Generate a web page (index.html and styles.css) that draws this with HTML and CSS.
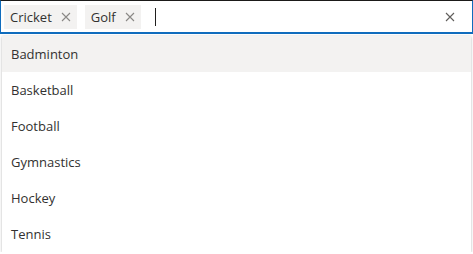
FILE: index.html
```html
<!DOCTYPE html>
<html>
<head>
<meta charset="utf-8">
<link rel="stylesheet" href="styles.css">
</head>
<body>
<div class="wrap">
  <div class="input">
    <div class="chips">
      <span class="chip">Cricket<span class="chip-x"><svg width="10" height="10" viewBox="0 0 10 10"><path d="M1 1L9 9M9 1L1 9" stroke="#8a8886" stroke-width="1.1" fill="none"/></svg></span></span>
      <span class="chip">Golf<span class="chip-x"><svg width="10" height="10" viewBox="0 0 10 10"><path d="M1 1L9 9M9 1L1 9" stroke="#8a8886" stroke-width="1.1" fill="none"/></svg></span></span>
      <span class="caret"></span>
    </div>
    <span class="clear"><svg width="10" height="10" viewBox="0 0 10 10"><path d="M1 1L9 9M9 1L1 9" stroke="#605e5c" stroke-width="1.1" fill="none"/></svg></span>
  </div>
  <ul class="popup">
    <li class="item active">Badminton</li>
    <li class="item">Basketball</li>
    <li class="item">Football</li>
    <li class="item">Gymnastics</li>
    <li class="item">Hockey</li>
    <li class="item">Tennis</li>
  </ul>
</div>
</body>
</html>
```
FILE: styles.css
```css
html, body { margin: 0; padding: 0; background: #fff; }
body { font-family: "Open Sans", "Noto Sans", sans-serif; font-size: 13px; color: #323130; }
.wrap { width: 473px; }
.input {
  box-sizing: border-box;
  height: 34px;
  border: 1px solid #0f6cbd;
  border-top-color: #1b1a19;
  border-bottom: 2px solid #0f6cbd;
  display: flex;
  align-items: center;
  padding: 0 17px 0 3px;
}
.chips { flex: 1; display: flex; align-items: center; gap: 8px; }
.chip {
  display: inline-flex; align-items: center;
  background: #f3f2f1; height: 24px; padding: 0 6px 0 6px;
  gap: 9px; color: #323130;
}
.chip-x { display: inline-flex; }
.caret { width: 1px; height: 18px; background: #201f1e; margin-left: 6px; }
.clear { display: inline-flex; }
.popup {
  list-style: none; margin: 2px 2px 0 2px; padding: 0;
  box-shadow: 0 1px 3px rgba(0,0,0,0.2), 0 0 2px rgba(0,0,0,0.1);
}
.item { height: 36px; line-height: 36px; padding-left: 9px; }
.item.active { background: #f3f2f1; }
```
